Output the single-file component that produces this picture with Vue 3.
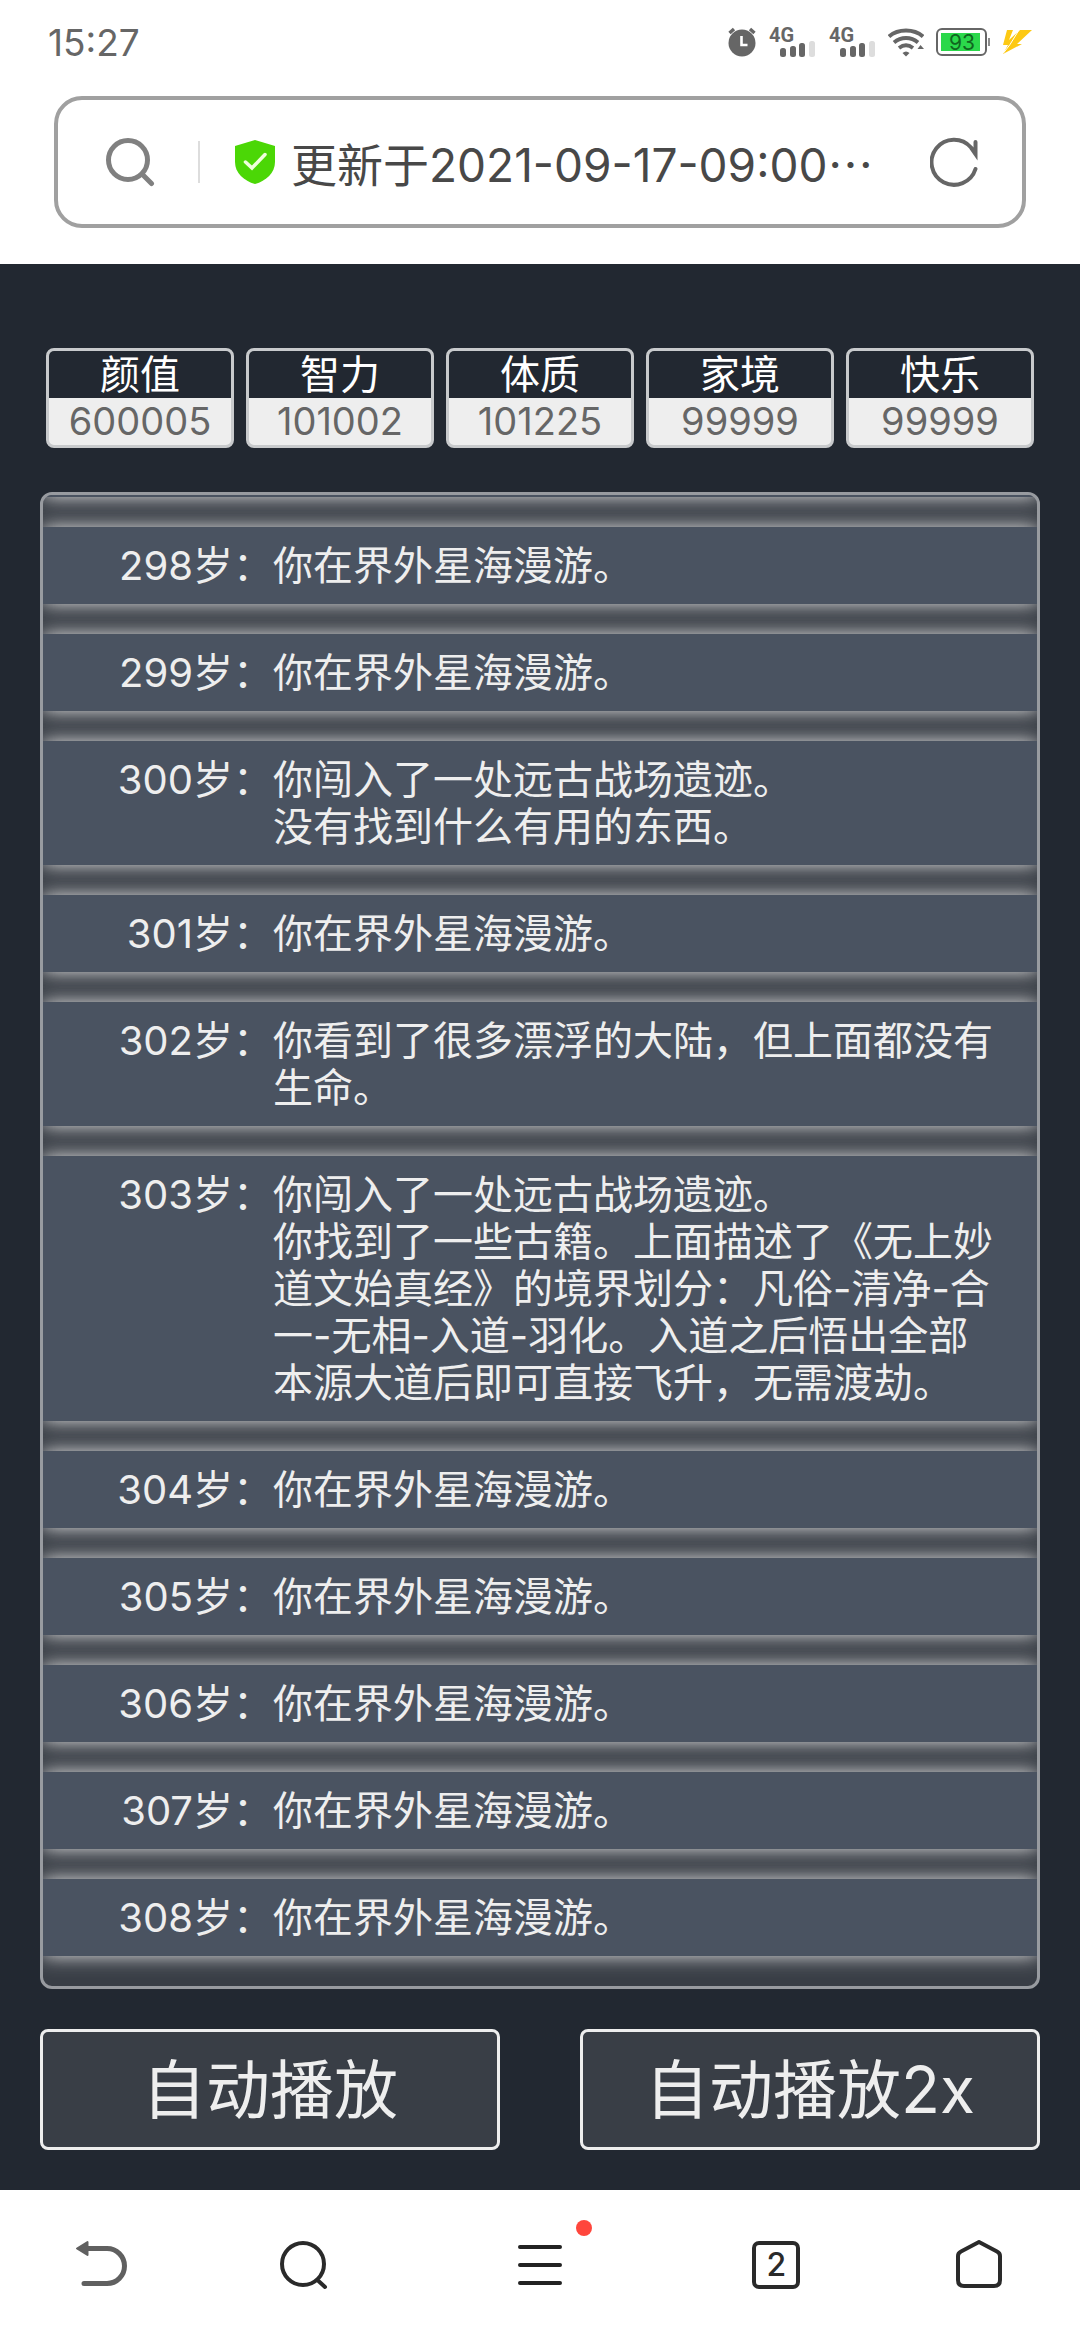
<template>
  <div class="page">
    <header class="browser-top">
      <div class="status-bar">
        <span class="clock">15:27</span>
        <div class="status-icons">
          <svg width="28" height="30" viewBox="0 0 28 30">
            <circle cx="14" cy="16" r="13.5" fill="#666" />
            <path d="M1.5 6 6 2M26.5 6 22 2" stroke="#666" stroke-width="3.4" />
            <path d="M13.5 9v9h6" fill="none" stroke="#fff" stroke-width="2.6" />
          </svg>
          <svg v-for="sim in 2" :key="sim" width="48" height="44" viewBox="0 -6 48 44">
            <text class="net-type" x="1" y="16">4G</text>
            <rect x="12" y="22" width="6" height="9" rx="2.5" fill="#666" />
            <rect x="22" y="20" width="6" height="11" rx="2.5" fill="#666" />
            <rect x="31" y="17" width="6" height="14" rx="2.5" fill="#666" />
            <rect x="41" y="15" width="6" height="16" rx="2.5" fill="#ddd" />
          </svg>
          <svg width="36" height="30" viewBox="0 0 36 30">
            <g fill="none" stroke="#666" stroke-width="3.8">
              <path d="M1 9.5C10 1.5 26 1.5 35 9.5" />
              <path d="M6 15.5C13 9.5 23 9.5 30 15.5" />
              <path d="M11 21C15.5 17.5 20.5 17.5 25 21" />
            </g>
            <path d="M14.5 26Q18 23 21.5 26L18 29.5Z" fill="#666" />
            <path d="M29.5 22 32.5 18 36 22Z" fill="#666" />
          </svg>
          <svg width="54" height="28" viewBox="0 0 54 28">
            <rect x="1" y="1" width="49" height="26" rx="5" fill="none" stroke="#666" stroke-width="2" />
            <rect x="5" y="5" width="39" height="18" fill="#2bd84b" />
            <path d="M53 10v8" stroke="#666" stroke-width="1.5" />
            <text class="battery-level" x="26" y="22" text-anchor="middle">93</text>
          </svg>
          <svg width="30" height="26" viewBox="0 0 30 26">
            <path d="M5 1H11L7 11 18 1H30L15 15H20L1 25 6 16H1Z" fill="#fdc913" />
            <path d="M1.5 24 8 15.5 17 1" fill="none" stroke="#fff" stroke-width="1" />
          </svg>
        </div>
      </div>

      <div class="address-bar">
        <button class="icon-btn" aria-label="搜索">
          <svg width="50" height="50" viewBox="0 0 50 50" fill="none" stroke="#808080" stroke-width="5" stroke-linecap="round">
            <circle cx="23" cy="23" r="19.5" />
            <path d="M37 37 46.5 46.5" />
          </svg>
        </button>
        <i class="divider"></i>
        <svg class="shield" width="40" height="46" viewBox="0 0 40 46">
          <path d="M20 1 40 7V23C40 34 31 42 20 45 9 42 0 34 0 23V7Z" fill="#4bd706" />
          <path d="M10.5 23 17 29 30 15.5" fill="none" stroke="#efffdc" stroke-width="3.5" stroke-linecap="round" />
        </svg>
        <button class="page-title">更新于2021-09-17-09:00<span class="dots">…</span></button>
        <button class="icon-btn" aria-label="刷新">
          <svg width="48" height="50" viewBox="0 0 48 50" fill="none" stroke="#666" stroke-width="4" stroke-linecap="round">
            <path d="M45.5 32A22.5 22.5 0 1 1 41 10.5L45.5 17V5" />
          </svg>
        </button>
      </div>
    </header>

    <main class="game">
      <ul class="property">
        <li v-for="item in properties" :key="item.name">
          <span class="name">{{ item.name }}</span>
          <span class="value">{{ item.value }}</span>
        </li>
      </ul>

      <ul class="trajectory">
        <li v-for="item in trajectory" :key="item.age">
          <span class="age">{{ item.age }}岁：</span>
          <span class="content">{{ item.content }}</span>
        </li>
      </ul>

      <div class="actions">
        <button>自动播放</button>
        <button>自动播放2x</button>
      </div>
    </main>

    <nav class="toolbar">
      <button aria-label="返回">
        <svg width="52" height="50" viewBox="0 0 52 50">
          <path d="M12 8.5H32A17.5 17.5 0 0 1 32 43.5H9" fill="none" stroke="#606060" stroke-width="5" stroke-linecap="round" />
          <path d="M2 8.5 12.5 2V15Z" fill="#606060" stroke="#606060" stroke-width="2" stroke-linejoin="round" />
        </svg>
      </button>
      <button aria-label="搜索">
        <svg width="50" height="50" viewBox="0 0 50 50" fill="none" stroke="#2a2a2a" stroke-width="4" stroke-linecap="round">
          <circle cx="24" cy="24" r="21" />
          <path d="M39.5 41 46 47" />
        </svg>
      </button>
      <button aria-label="菜单">
        <span class="menu-icon">
          <svg width="44" height="50" viewBox="0 0 44 50" stroke="#222" stroke-width="4" stroke-linecap="round">
            <path d="M2 7H42M2 25H42M2 43H42" />
          </svg>
          <i class="red-dot"></i>
        </span>
      </button>
      <button aria-label="标签页">
        <span class="tab-count">2</span>
      </button>
      <button aria-label="主页">
        <svg width="46" height="50" viewBox="0 0 46 50" fill="none" stroke="#2a2a2a" stroke-width="4" stroke-linejoin="round">
          <path d="M23 2 41 11.5Q44 13 44 16V40Q44 46 38 46H8Q2 46 2 40V16Q2 13 5 11.5Z" />
        </svg>
      </button>
    </nav>
  </div>
</template>

<script setup>
const properties = [
  { name: '颜值', value: 600005 },
  { name: '智力', value: 101002 },
  { name: '体质', value: 101225 },
  { name: '家境', value: 99999 },
  { name: '快乐', value: 99999 }
];

const roaming = '你在界外星海漫游。';

const trajectory = [
  { age: 298, content: roaming },
  { age: 299, content: roaming },
  { age: 300, content: '你闯入了一处远古战场遗迹。\n没有找到什么有用的东西。' },
  { age: 301, content: roaming },
  { age: 302, content: '你看到了很多漂浮的大陆，但上面都没有生命。' },
  {
    age: 303,
    content: '你闯入了一处远古战场遗迹。\n你找到了一些古籍。上面描述了《无上妙道文始真经》的境界划分：凡俗-清净-合一-无相-入道-羽化。入道之后悟出全部本源大道后即可直接飞升，无需渡劫。'
  },
  { age: 304, content: roaming },
  { age: 305, content: roaming },
  { age: 306, content: roaming },
  { age: 307, content: roaming },
  { age: 308, content: roaming }
];
</script>

<style>
body {
  margin: 0;
  background: #fff;
}
</style>

<style scoped>
.page {
  display: flex;
  flex-direction: column;
  min-height: 100vh;
  background: #fff;
  font-family: Inter, 'Noto Sans CJK SC', sans-serif;
  font-size: 40px;
}

button {
  margin: 0;
  padding: 0;
  border: none;
  background: none;
  color: inherit;
  font: inherit;
  cursor: pointer;
}

ul {
  list-style: none;
  margin: 0;
  padding: 0;
}

svg {
  display: block;
  flex: none;
}

/* Browser chrome */
.status-bar {
  display: flex;
  align-items: center;
  justify-content: space-between;
  height: 84px;
  padding: 0 48px;
  color: #666;
}

.clock {
  font-size: 37px;
}

.status-icons {
  display: flex;
  align-items: center;
  gap: 12px;
}

.net-type {
  font: 700 20px Roboto, sans-serif;
  fill: #666;
}

.battery-level {
  font: 400 21px Inter, sans-serif;
  fill: #10661f;
}

.address-bar {
  display: flex;
  align-items: center;
  box-sizing: border-box;
  height: 132px;
  margin: 12px 54px 36px;
  padding: 0 44px 0 47px;
  border: 4px solid #a0a0a0;
  border-radius: 28px;
}

.icon-btn {
  flex: none;
}

.divider {
  width: 2px;
  height: 42px;
  margin: 0 35px 0 43px;
  background: #ddd;
}

.page-title {
  flex: 1;
  min-width: 0;
  margin: 0 16px;
  color: #484848;
  font-size: 46px;
  text-align: left;
  white-space: nowrap;
}

.dots {
  font-family: 'Noto Sans CJK SC', sans-serif;
}

/* Game */
.game {
  flex: 1;
  padding: 84px 40px 40px;
  background: #222831;
  color: #eee;
}

.property {
  display: flex;
  gap: 12px;
  margin: 0 6px 44px;
}

.property li {
  display: flex;
  flex: 1;
  flex-direction: column;
  border: 3px solid #c8cacc;
  border-radius: 8px;
  background: #eee;
  line-height: 47px;
  text-align: center;
  overflow: hidden;
}

.name {
  background: #222831;
  color: #fff;
}

.value {
  color: #666;
  font-size: 38px;
}

.trajectory {
  display: flex;
  flex-direction: column;
  gap: 30px;
  padding-bottom: 30px;
  border: 3px solid #989ba0;
  border-radius: 12px;
  background: #393e46;
  overflow: hidden;
}

/* tail of the row scrolled out above */
.trajectory::before {
  content: '';
  height: 77px;
  margin-top: -75px;
}

.trajectory::before,
.trajectory li {
  background: #4a5361;
  box-shadow: 0 0 18px #e4e4e4;
}

.trajectory li {
  display: flex;
  padding: 15px 34px 15px 0;
  line-height: 47px;
}

.age {
  flex: none;
  width: 230px;
  text-align: right;
}

.content {
  flex: 1;
  white-space: pre-line;
}

.actions {
  display: flex;
  gap: 80px;
  margin-top: 40px;
}

.actions button {
  flex: 1;
  height: 121px;
  padding-bottom: 10px;
  border: 3px solid #eee;
  border-radius: 8px;
  background: #393e46;
  font-size: 64px;
}

/* Bottom toolbar */
.toolbar {
  display: grid;
  grid-template-columns: 3fr 3fr 4fr 3fr 3fr;
  height: 150px;
}

.toolbar button {
  display: flex;
  align-items: center;
  justify-content: center;
}

.menu-icon {
  position: relative;
}

.red-dot {
  position: absolute;
  top: -20px;
  right: -30px;
  width: 16px;
  height: 16px;
  border-radius: 50%;
  background: #ff463c;
}

.tab-count {
  box-sizing: border-box;
  width: 48px;
  height: 48px;
  border: 4px solid #2a2a2a;
  border-radius: 7px;
  color: #2a2a2a;
  font-size: 32px;
  font-weight: 500;
  line-height: 40px;
}
</style>
